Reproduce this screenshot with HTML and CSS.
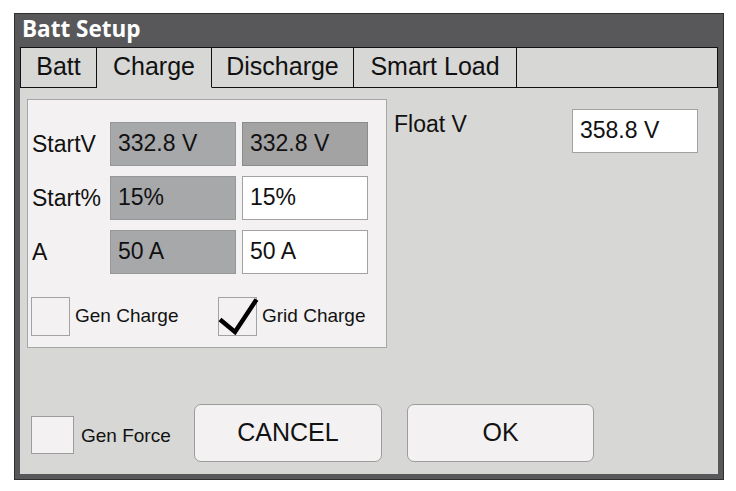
FILE: index.html
```html
<!DOCTYPE html>
<html>
<head>
<meta charset="utf-8">
<link rel="stylesheet" href="styles.css">
</head>
<body>
<div class="window">
  <div class="title">Batt Setup</div>
  <div class="tabs">
    <div class="tab tab-batt">Batt</div>
    <div class="tab tab-charge active">Charge</div>
    <div class="tab tab-discharge">Discharge</div>
    <div class="tab tab-smart">Smart Load</div>
    <div class="tab-fill"></div>
  </div>
  <div class="content">
    <div class="top">
      <div class="panel">
        <div class="grid">
          <div class="lbl">StartV</div>
          <div class="box gray">332.8 V</div>
          <div class="box gray-dark">332.8 V</div>
          <div class="lbl">Start%</div>
          <div class="box gray">15%</div>
          <div class="box white">15%</div>
          <div class="lbl">A</div>
          <div class="box gray">50 A</div>
          <div class="box white">50 A</div>
        </div>
        <div class="checks">
          <div class="chk chk-gen">
            <span class="cb"></span>
            <span class="cl">Gen Charge</span>
          </div>
          <div class="chk">
            <span class="cb">
              <svg class="tick" width="39" height="39" viewBox="0 0 39 39"><path d="M2 22.5 L17 35 L38.5 2.5" fill="none" stroke="#000" stroke-width="4.5" stroke-linejoin="miter"/></svg>
            </span>
            <span class="cl">Grid Charge</span>
          </div>
        </div>
      </div>
      <div class="float">
        <div class="float-lbl">Float V</div>
        <div class="box white float-box">358.8 V</div>
      </div>
    </div>
    <div class="bottom">
      <span class="cb cb-force"></span>
      <span class="force-lbl">Gen Force</span>
      <div class="btn btn-cancel">CANCEL</div>
      <div class="btn btn-ok">OK</div>
    </div>
  </div>
</div>
</body>
</html>
```

FILE: styles.css
```css
html, body {
  margin: 0;
  padding: 0;
  background: #ffffff;
}

body {
  font-family: "Liberation Sans", Arial, sans-serif;
  color: #111111;
}

.window {
  margin: 13px 0 0 14px;
  width: 710px;
  height: 467px;
  box-sizing: border-box;
  border: 1px solid #2f2f2f;
  background: #58585a;
  padding: 0 5px 5px 5px;
  display: flex;
  flex-direction: column;
}

.title {
  height: 33px;
  line-height: 30px;
  padding-left: 2px;
  color: #ffffff;
  font-family: "Open Sans", "DejaVu Sans", sans-serif;
  font-weight: 700;
  font-size: 22.5px;
}

.tabs {
  display: flex;
  height: 41px;
  box-sizing: border-box;
  border-top: 1px solid #111111;
  border-left: 1px solid #111111;
  border-right: 1px solid #111111;
  background: #d7d7d5;
}

.tab {
  box-sizing: border-box;
  border-right: 1px solid #111111;
  border-bottom: 1px solid #111111;
  text-align: center;
  font-size: 25px;
  line-height: 36px;
  color: #111111;
}

.tab.active {
  border-bottom-color: transparent;
}

.tab-batt { width: 76px; }
.tab-charge { width: 115px; }
.tab-discharge { width: 142px; }
.tab-smart { width: 163px; }

.tab-fill {
  flex: 1;
  border-bottom: 1px solid #111111;
}

.content {
  flex: 1;
  background: #d7d7d5;
  display: flex;
  flex-direction: column;
}

.top {
  display: flex;
  align-items: flex-start;
}

.panel {
  margin: 11px 0 0 7px;
  width: 360px;
  height: 249px;
  box-sizing: border-box;
  border: 1px solid #a6a6a6;
  background: #f3f1f2;
  padding: 22px 0 0 4px;
}

.grid {
  display: grid;
  grid-template-columns: 72px 126px 126px;
  grid-auto-rows: 44px;
  column-gap: 6px;
  row-gap: 10px;
}

.lbl {
  font-size: 23px;
  display: flex;
  align-items: center;
}

.box {
  box-sizing: border-box;
  height: 44px;
  border: 1px solid #9a9a9a;
  font-size: 23px;
  padding-left: 7px;
  display: flex;
  align-items: center;
  padding-bottom: 2px;
}

.gray {
  background: #a7a8aa;
  border-color: #969799;
}

.gray-dark {
  background: #a4a3a4;
  border-color: #8c8b8c;
}

.white {
  background: #ffffff;
  border-color: #a2a2a2;
}

.checks {
  display: flex;
  margin-top: 23px;
  margin-left: -1px;
}

.chk {
  display: flex;
  align-items: center;
}

.chk-gen {
  width: 187px;
}

.cb {
  display: block;
  width: 39px;
  height: 39px;
  box-sizing: border-box;
  border: 1px solid #a3a3a3;
  background: #f3f1f2;
}

.tick {
  display: block;
  margin: -1px;
  overflow: visible;
}

.cl {
  font-size: 19px;
  margin-left: 5px;
  padding-bottom: 1px;
}

.float {
  flex: 1;
  display: flex;
  align-items: flex-start;
  margin: 21px 20px 0 7px;
}

.float-lbl {
  font-size: 23px;
  margin-top: 2px;
}

.float-box {
  margin-left: auto;
  width: 126px;
}

.bottom {
  margin-top: auto;
  margin-bottom: 12px;
  display: flex;
  align-items: center;
  padding-left: 11px;
}

.cb-force {
  width: 43px;
  height: 38px;
  border-color: #9c9c9c;
  margin-top: 4px;
}

.force-lbl {
  font-size: 19px;
  width: 113px;
  margin-left: 7px;
  margin-top: 5px;
}

.btn {
  box-sizing: border-box;
  width: 188px;
  height: 58px;
  border: 1px solid #9c9c9c;
  border-radius: 7px;
  background: #f3f1f2;
  font-size: 25px;
  display: flex;
  align-items: center;
  justify-content: center;
  padding-bottom: 2px;
}

.btn-ok {
  margin-left: 25px;
  width: 187px;
}
```
